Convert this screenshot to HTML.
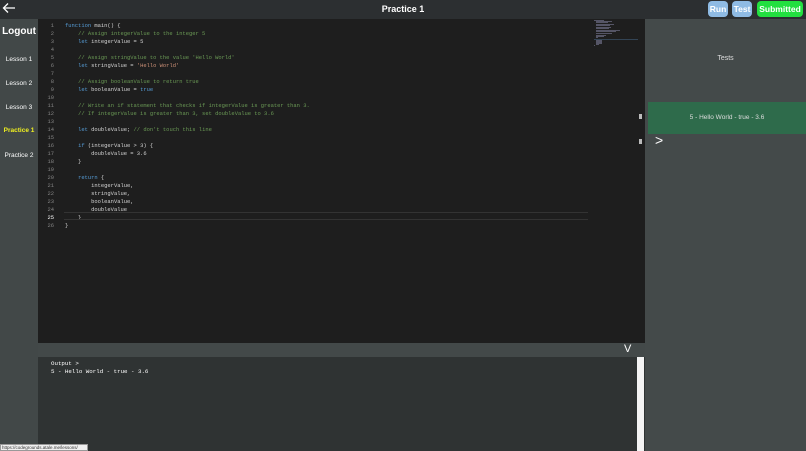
<!DOCTYPE html>
<html><head><style>
*{margin:0;padding:0;box-sizing:border-box}
body{width:806px;height:451px;overflow:hidden;background:#434949;font-family:"Liberation Sans",sans-serif;position:relative}
.top{position:absolute;left:0;top:0;width:806px;height:19px;background:#2c2f31}
.title{position:absolute;left:0;width:806px;top:4px;text-align:center;color:#fff;font-size:9px;font-weight:bold}
.btn{position:absolute;top:1px;height:16px;border-radius:4px;color:#fff;font-weight:bold;font-size:8.5px;line-height:16px;text-align:center}
.side{position:absolute;left:0;top:19px;width:38px;height:432px;background:#424848}
.side div{position:absolute;left:0;width:38px;text-align:center;color:#fff;font-size:6.5px}
.ed{position:absolute;left:38px;top:19px;width:607px;height:324px;background:#1e1e1e;font-family:"Liberation Mono",monospace;font-size:5.45px}
.ln{position:absolute;left:0;width:16px;text-align:right;color:#858585}
.cd{position:absolute;left:27px;white-space:pre;color:#d4d4d4}
.k{color:#569cd6}.c{color:#6a9955}.s{color:#ce9178}
.right{position:absolute;left:645px;top:19px;width:161px;height:432px;background:#444a4a}
.bar{position:absolute;left:38px;top:343px;width:607px;height:14px;background:#434949}
.out{position:absolute;left:38px;top:357px;width:607px;height:94px;background:#2f3333;font-family:"Liberation Mono",monospace;font-size:5.8px;color:#fff}
.mm{position:absolute;height:1px;background:#556}
</style></head><body>
<div class="top"></div>
<svg style="position:absolute;left:2px;top:2px" width="14" height="12" viewBox="0 0 14 12"><path d="M13 6H2M6 1.5L1.5 6 6 10.5" stroke="#fff" stroke-width="1.3" fill="none"/></svg>
<div class="title">Practice 1</div>
<div class="btn" style="left:708px;width:20px;background:#8fbbe4">Run</div>
<div class="btn" style="left:732px;width:20px;background:#8fbbe4">Test</div>
<div class="btn" style="left:757px;width:46px;background:#22e040">Submitted</div>
<div class="side">
<div style="top:7px;font-size:10px;font-weight:bold">Logout</div>
<div style="top:37px">Lesson 1</div>
<div style="top:61px">Lesson 2</div>
<div style="top:85px">Lesson 3</div>
<div style="top:108px;color:#f0f020;font-weight:bold">Practice 1</div>
<div style="top:133px">Practice 2</div>
</div>
<div class="ed" id="ed"></div>
<div class="right">
<div style="position:absolute;left:0;width:161px;top:36px;text-align:center;color:#ddd;font-size:7px">Tests</div>
<div style="position:absolute;left:3px;top:83px;width:158px;height:32px;background:#2e6b4b;color:#ddd;font-size:6.5px;text-align:center;line-height:32px">5 - Hello World - true - 3.6</div>
<div style="position:absolute;left:10px;top:113px;color:#fff;font-size:14px">&gt;</div>
</div>
<div style="position:absolute;left:639px;top:114px;width:3px;height:5px;background:#bbb"></div>
<div style="position:absolute;left:639px;top:139px;width:3px;height:5px;background:#bbb"></div>
<div class="bar"><div style="position:absolute;left:586px;top:0;color:#fff;font-size:11px">V</div></div>
<div class="out">
<div style="position:absolute;left:13px;top:3px">Output &gt;</div>
<div style="position:absolute;left:13px;top:11px">5 - Hello World - true - 3.6</div>
<div style="position:absolute;left:599px;top:0;width:7px;height:94px;background:#f4f4f4"></div>
</div>
<div style="position:absolute;left:0;top:444px;width:88px;height:7px;background:#f0f0f0;border:1px solid #999;font-size:4.5px;color:#333;line-height:5px;padding-left:1px">https://codegrounds.atale.me/lessons/</div>
<script>
var L=['<span class="k">function</span> main() {','    <span class="c">// Assign integerValue to the integer 5</span>','    <span class="k">let</span> integerValue = 5','','    <span class="c">// Assign stringValue to the value \'Hello World\'</span>','    <span class="k">let</span> stringValue = <span class="s">\'Hello World\'</span>','','    <span class="c">// Assign booleanValue to return true</span>','    <span class="k">let</span> booleanValue = <span class="k">true</span>','','    <span class="c">// Write an if statement that checks if integerValue is greater than 3.</span>','    <span class="c">// If integerValue is greater than 3, set doubleValue to 3.6</span>','','    <span class="k">let</span> doubleValue; <span class="c">// don\'t touch this line</span>','','    <span class="k">if</span> (integerValue > 3) {','        doubleValue = 3.6','    }','','    <span class="k">return</span> {','        integerValue,','        stringValue,','        booleanValue,','        doubleValue','    }','}'];
var h='';for(var i=0;i<L.length;i++){var t=3+i*8;h+='<div class="ln" style="top:'+t+'px'+(i==24?';color:#fff':'')+'">'+(i+1)+'</div><div class="cd" style="top:'+t+'px">'+L[i]+'</div>';}
h+='<div style="position:absolute;left:26px;top:193px;width:524px;height:8px;border-top:1px solid #333;border-bottom:1px solid #333"></div>';
var mw=[10,16,12,0,18,14,0,15,13,0,24,20,0,16,0,10,8,2,0,4,6,6,6,6,3,1];
for(var j=0;j<mw.length;j++){if(mw[j])h+='<div class="mm" style="left:'+(556+(j>0&&j<25?2:0))+'px;top:'+(1+j)+'px;width:'+mw[j]+'px"></div>';}
h+='<div style="position:absolute;left:556px;top:20px;width:44px;height:1px;background:#345"></div>';
document.getElementById('ed').innerHTML=h;
</script>
</body></html>
